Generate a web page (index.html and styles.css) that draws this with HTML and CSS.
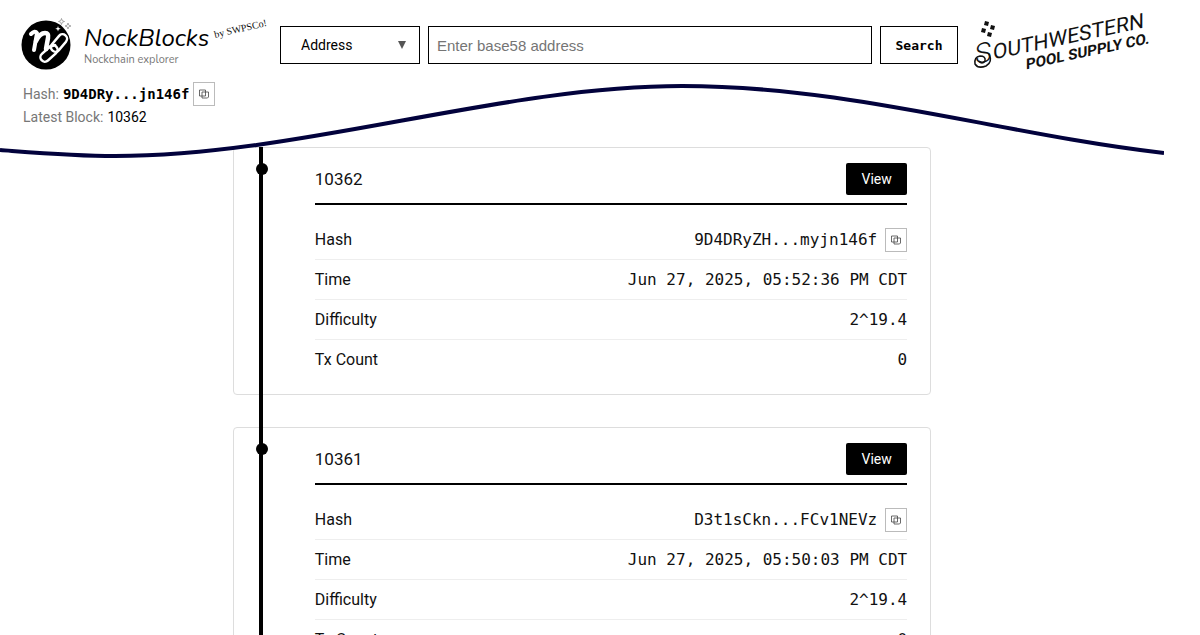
FILE: index.html
```html
<!DOCTYPE html>
<html lang="en">
<head>
  <meta charset="UTF-8">
  <meta name="viewport" content="width=device-width, initial-scale=1.0">
  <title>NockBlocks</title>
  <link rel="stylesheet" href="styles.css">
</head>
<body>
  <svg class="sprite" aria-hidden="true">
    <symbol id="copy" viewBox="0 0 10 10">
      <path d="M.5 1h6v6h-6zM3 3h6.500v5l-1 1H3z" fill="none" stroke="currentColor" stroke-width=".8"/>
    </symbol>
  </svg>

  <header class="header">
    <div class="topbar">
      <div class="side">
        <a class="brand" href="#">
          <svg class="logo" viewBox="0 0 54 54" aria-hidden="true">
            <circle cx="26" cy="29" r="24.5" fill="#000"/>
            <g fill="none" stroke="#fff" stroke-linecap="round" stroke-linejoin="round">
              <path d="M11 18q4-4 6-1L14 34" stroke-width="4"/>
              <path d="M16 25q4-8 9-8 4 0 3 5l-2 11" stroke-width="4.500"/>
              <rect x="29" y="22.500" width="20" height="9" rx="4.500" transform="rotate(-50 39 27)" stroke-width="2.500"/>
              <rect x="19" y="33" width="20" height="9" rx="4.500" transform="rotate(-42 29 37.500)" stroke-width="2.500"/>
              <path d="M27 32l8-3" stroke-width="2.500"/>
            </g>
            <path d="M38 10l.7 2 2 .7-2 .7-.7 2-.7-2-2-.7 2-.7z" fill="#fff"/>
            <g fill="#fff" stroke="#777" stroke-width=".6">
              <path d="M41.500 2.500l.8 2.200 2.200.8-2.200.8-.8 2.200-.8-2.200-2.200-.8 2.200-.8z"/>
              <path d="M48 7l.8 2.200 2.200.8-2.200.8-.8 2.200-.8-2.200-2.200-.8 2.200-.8z"/>
            </g>
          </svg>
          <span class="brand-text">
            <span class="brand-name">NockBlocks</span>
            <span class="brand-sub">Nockchain explorer</span>
          </span>
          <span class="byline">by SWPSCo!</span>
        </a>
        <div class="status">
          <div class="status-row">
            <span>Hash:</span>
            <b class="mono">9D4DRy...jn146f</b>
            <button class="copy-btn" type="button" aria-label="Copy"><svg><use href="#copy"/></svg></button>
          </div>
          <div class="status-row"><span>Latest Block:</span> <em>10362</em></div>
        </div>
      </div>

      <form class="search">
        <label class="select-box">
          <select aria-label="Search type">
            <option>Address</option>
            <option>Block</option>
          </select>
          <span class="arrow" aria-hidden="true"></span>
        </label>
        <input type="text" aria-label="Search" placeholder="Enter base58 address">
        <button class="search-btn" type="submit">Search</button>
      </form>

      <a class="sponsor" href="#" aria-label="Southwestern Pool Supply Co.">
        <svg viewBox="0 0 180 70">
          <g transform="skewY(-12)">
            <text class="sw-big" x="3" y="53">S</text>
            <text class="sw" x="21" y="52">OUTHWESTERN</text>
            <text class="sw-bold" x="54" y="69">POOL SUPPLY CO.</text>
          </g>
          <path d="M17 42q4 8-3 12-8 3-11-2-1-7 5-8 6 0 5 5-3 4-6 0" fill="none" stroke="#111" stroke-width="1.500"/>
          <path d="M13 9l4 1-1 4-4-1zM19 13l4 1-1 4-4-1zM10 16l4 1-1 4-4-1zM16 20l4 1-1 4-4-1z" fill="#111"/>
        </svg>
      </a>
    </div>
    <svg class="wave" viewBox="0 0 1164 160" preserveAspectRatio="none" aria-hidden="true">
      <path class="wave-fill" d="M0 0V150C40 153 75 156 115 156C300 156 500 86 682 86C850 86 1000 134 1164 153V0z"/>
      <path class="wave-line" d="M0 150C40 153 75 156 115 156C300 156 500 86 682 86C850 86 1000 134 1164 153"/>
    </svg>
  </header>

  <main class="blocks">
    <article class="block">
      <div class="block-head">
        <h2>10362</h2>
        <button class="view-btn" type="button">View</button>
      </div>
      <dl>
        <div><dt>Hash</dt><dd>9D4DRyZH...myjn146f <button class="copy-btn" type="button" aria-label="Copy"><svg><use href="#copy"/></svg></button></dd></div>
        <div><dt>Time</dt><dd>Jun 27, 2025, 05:52:36 PM CDT</dd></div>
        <div><dt>Difficulty</dt><dd>2^19.4</dd></div>
        <div><dt>Tx Count</dt><dd>0</dd></div>
      </dl>
    </article>

    <article class="block">
      <div class="block-head">
        <h2>10361</h2>
        <button class="view-btn" type="button">View</button>
      </div>
      <dl>
        <div><dt>Hash</dt><dd>D3t1sCkn...FCv1NEVz <button class="copy-btn" type="button" aria-label="Copy"><svg><use href="#copy"/></svg></button></dd></div>
        <div><dt>Time</dt><dd>Jun 27, 2025, 05:50:03 PM CDT</dd></div>
        <div><dt>Difficulty</dt><dd>2^19.4</dd></div>
        <div><dt>Tx Count</dt><dd>0</dd></div>
      </dl>
    </article>
  </main>
</body>
</html>
```

FILE: styles.css
```css
* {
  box-sizing: border-box;
}

html {
  height: 100%;
  overflow: hidden;
}

body {
  margin: 0;
  height: 100%;
  padding-right: 36px;
  overflow: hidden;
  background: #fff;
  color: #111;
  font-family: Roboto, sans-serif;
  font-size: 16px;
}

a {
  color: inherit;
  text-decoration: none;
}

.sprite {
  display: none;
}

.mono {
  font-family: "DejaVu Sans Mono", monospace;
}

/* header */
.header {
  position: relative;
  z-index: 2;
  height: 147px;
}

.wave {
  position: absolute;
  top: 0;
  left: 0;
  z-index: -1;
  width: 100%;
  height: 160px;
}

.wave-fill {
  fill: #fff;
}

.wave-line {
  fill: none;
  stroke: #02023c;
  stroke-width: 4;
}

.topbar {
  display: flex;
  align-items: flex-start;
  padding: 12px 12px 0 20px;
}

.side {
  width: 260px;
}

.brand {
  display: flex;
  align-items: flex-start;
  height: 58px;
  padding-top: 4px;
}

.logo {
  width: 54px;
  height: 54px;
}

.brand-text {
  display: flex;
  flex-direction: column;
  padding: 7px 4px 0 10px;
}

.brand-name {
  color: #000;
  font-family: Nunito, Lato, sans-serif;
  font-size: 24px;
  font-style: italic;
  line-height: 30px;
}

.brand-sub {
  color: #777;
  font-family: Nunito, "Noto Sans", sans-serif;
  font-size: 11px;
  line-height: 14px;
}

.byline {
  padding-top: 6px;
  font-family: "Liberation Serif", serif;
  font-size: 10px;
  line-height: 14px;
  white-space: nowrap;
  transform: rotate(-13deg);
}

.status {
  padding: 12px 0 0 3px;
  color: #777;
  font-size: 14px;
}

.status-row {
  display: flex;
  align-items: center;
  gap: 4px;
  line-height: 22px;
}

.status-row b,
.status-row em {
  color: #000;
  font-style: normal;
}

.copy-btn {
  display: inline-flex;
  align-items: center;
  justify-content: center;
  width: 22px;
  height: 24px;
  padding: 0;
  border: 1px solid #bbb;
  background: #fff;
  color: #444;
}

.copy-btn svg {
  width: 10px;
  height: 10px;
}

.search {
  display: flex;
  flex: 1;
  gap: 8px;
  height: 38px;
  margin-top: 14px;
}

.select-box {
  position: relative;
  width: 140px;
}

.search select,
.search input,
.search-btn {
  height: 38px;
  margin: 0;
  border: 1px solid #000;
  border-radius: 0;
  background: #fff;
}

.search select {
  width: 100%;
  padding: 0 20px;
  appearance: none;
  color: #000;
  font-family: Roboto, sans-serif;
  font-size: 14px;
}

.arrow {
  position: absolute;
  top: 15px;
  right: 14px;
  border: 4px solid transparent;
  border-top: 8px solid #555;
  border-bottom: 0;
}

.search input {
  flex: 1;
  min-width: 0;
  padding: 0 8px;
  font-family: "Liberation Sans", Arial, sans-serif;
  font-size: 15px;
}

.search input::placeholder {
  color: #757575;
}

.search-btn {
  width: 78px;
  padding: 0;
  color: #000;
  font-family: "DejaVu Sans Mono", monospace;
  font-size: 13px;
  font-weight: bold;
}

.sponsor {
  width: 180px;
  margin-left: 14px;
}

.sponsor svg {
  display: block;
  width: 180px;
  height: 70px;
  overflow: visible;
}

.sw-big,
.sw {
  fill: #111;
  font-family: Roboto, sans-serif;
  font-size: 21px;
  font-weight: 400;
}

.sw-big {
  font-size: 28px;
  font-weight: 300;
}

.sw-bold {
  fill: #111;
  font-family: Roboto, sans-serif;
  font-size: 15px;
  font-weight: 700;
}

/* block list */
.blocks {
  position: relative;
  display: flex;
  flex-direction: column;
  gap: 32px;
  width: 60%;
  margin: 0 auto;
}

.blocks::before {
  content: "";
  position: absolute;
  top: 0;
  bottom: 0;
  left: 26px;
  z-index: 1;
  width: 4px;
  background: #000;
}

.block {
  position: relative;
  padding: 15px 23px 14px 81px;
  border: 1px solid #ddd;
  border-radius: 4px;
}

.block::before {
  content: "";
  position: absolute;
  top: 15px;
  left: 22px;
  width: 12px;
  height: 12px;
  border-radius: 50%;
  background: #000;
}

.block-head {
  display: flex;
  align-items: center;
  justify-content: space-between;
  height: 42px;
  padding-bottom: 8px;
  border-bottom: 2px solid #000;
}

.block h2 {
  margin: 0;
  font-size: 17px;
  font-weight: 400;
}

.view-btn {
  width: 61px;
  height: 32px;
  border: 0;
  border-radius: 2px;
  background: #000;
  color: #fff;
  font-family: Roboto, sans-serif;
  font-size: 14px;
}

.block dl {
  margin: 15px 0 0;
}

.block dl div {
  display: flex;
  align-items: center;
  justify-content: space-between;
  height: 40px;
  border-bottom: 1px solid #eee;
}

.block dl div:last-child {
  border-bottom-color: transparent;
}

.block dd {
  display: flex;
  align-items: center;
  gap: 8px;
  margin: 0;
  font-family: "DejaVu Sans Mono", monospace;
  font-size: 16px;
}
```
